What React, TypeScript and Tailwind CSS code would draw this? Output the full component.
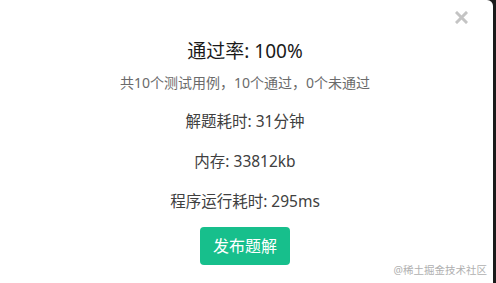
import React from "react";

export default function App() {
  const font = { fontFamily: '"Noto Sans", "Noto Sans CJK SC", sans-serif' };
  return (
    <div className="w-[496px] h-[283px] bg-[#1a1a1a] overflow-hidden flex" style={font}>
      <div className="relative w-[493px] h-[283px] bg-white rounded-tr-[6px] pr-[3px] flex flex-col items-center">
        <button className="absolute right-[25px] top-[11px] leading-none">
          <svg width="13" height="13" viewBox="0 0 13 13">
            <path d="M2 2 L11 11 M11 2 L2 11" stroke="#c4c4c4" strokeWidth="3" strokeLinecap="square" />
          </svg>
        </button>
        <div className="mt-[37px] text-[19px] leading-[28px] text-[#1a1a1a]">通过率: 100%</div>
        <div className="mt-[8px] text-[14px] leading-[20px] text-[#6b6b6b]">共10个测试用例，10个通过，0个未通过</div>
        <div className="mt-[17px] text-[15.5px] leading-[22px] text-[#404040]">解题耗时: 31分钟</div>
        <div className="mt-[18px] text-[15.5px] leading-[22px] text-[#404040]">内存: 33812kb</div>
        <div className="mt-[18px] text-[15.5px] leading-[22px] text-[#404040]">程序运行耗时: 295ms</div>
        <button className="mt-[15px] w-[90px] h-[38px] rounded-[4px] bg-[#17bf8c] text-white text-[16px] leading-none">发布题解</button>
        <div className="absolute right-[6px] bottom-[8px] text-[10.5px] leading-none text-[#b0b0b0]">@稀土掘金技术社区</div>
      </div>
    </div>
  );
}
